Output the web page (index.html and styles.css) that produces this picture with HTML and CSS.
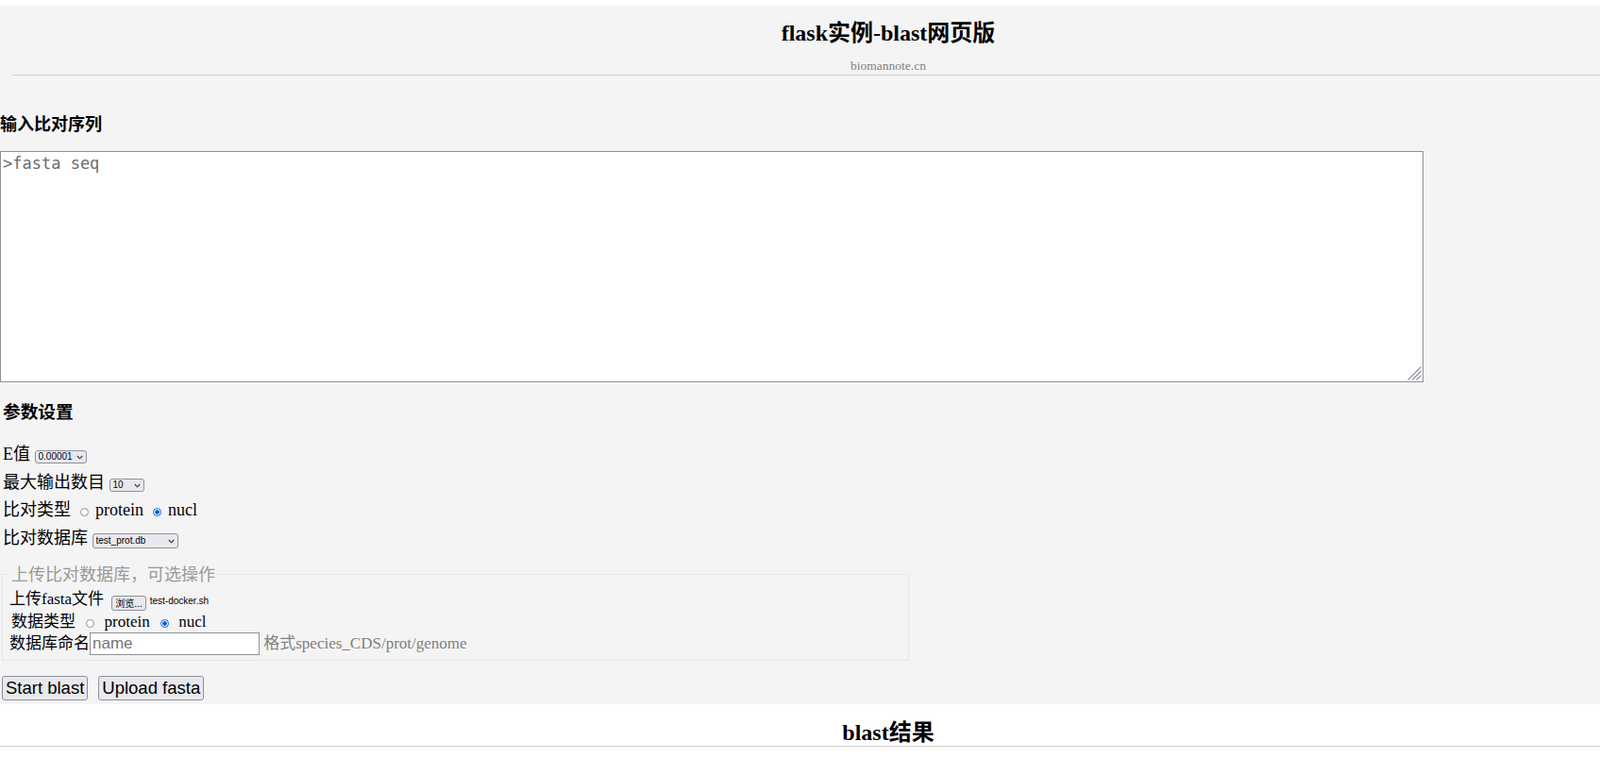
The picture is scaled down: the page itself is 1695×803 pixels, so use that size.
FILE: index.html
```html
<!DOCTYPE html>
<html lang="zh-CN">
<head>
<meta charset="utf-8">
<title>flask实例-blast网页版</title>
<link rel="stylesheet" href="styles.css">
</head>
<body>
<div class="page">
  <header class="header">
    <h1 class="title">flask实例-blast网页版</h1>
    <p class="site">biomannote.cn</p>
  </header>

  <h3 class="sec-title sec-input">输入比对序列</h3>
  <div class="seq-wrap">
    <textarea class="seq" placeholder=">fasta seq"></textarea>
    <svg class="grip" width="16" height="16" viewBox="0 0 16 16"><path d="M1.5 15.5 L15.5 1.5 M6 15.5 L15.5 6 M10.5 15.5 L15.5 10.5" fill="none" stroke="#8f8f9d" stroke-width="1.2"/></svg>
  </div>

  <h3 class="sec-title sec-params">参数设置</h3>
  <div class="params">
    <div class="row">E值 <span class="sel sel-e"><select><option>0.00001</option></select><svg class="chev" width="7" height="5" viewBox="0 0 7 5"><path d="M0.8 1 L3.5 3.8 L6.2 1" fill="none" stroke="#333" stroke-width="1.1"/></svg></span></div>
    <div class="row">最大输出数目 <span class="sel sel-n"><select><option>10</option></select><svg class="chev" width="7" height="5" viewBox="0 0 7 5"><path d="M0.8 1 L3.5 3.8 L6.2 1" fill="none" stroke="#333" stroke-width="1.1"/></svg></span></div>
    <div class="row">比对类型 <input class="radio" type="radio" name="t1"> protein <input class="radio" type="radio" name="t1" checked> nucl</div>
    <div class="row">比对数据库 <span class="sel sel-db"><select><option>test_prot.db</option></select><svg class="chev" width="7" height="5" viewBox="0 0 7 5"><path d="M0.8 1 L3.5 3.8 L6.2 1" fill="none" stroke="#333" stroke-width="1.1"/></svg></span></div>
  </div>

  <fieldset class="upload">
    <legend class="legend">上传比对数据库，可选操作</legend>
    <div class="frow">上传fasta文件 <span class="file-btn">浏览...</span><span class="file-name">test-docker.sh</span></div>
    <div class="frow frow-type">数据类型 <input class="radio radio-f" type="radio" name="t2"> protein <input class="radio radio-f" type="radio" name="t2" checked> nucl</div>
    <div class="frow">数据库命名<input class="name-input" type="text" placeholder="name"> <span class="hint">格式species_CDS/prot/genome</span></div>
  </fieldset>

  <div class="actions">
    <button class="btn" type="button">Start blast</button>
    <button class="btn" type="button">Upload fasta</button>
  </div>
</div>

<section class="results">
  <h2 class="results-title">blast结果</h2>
</section>
</body>
</html>
```

FILE: styles.css
```css
html, body {
  margin: 0;
  padding: 0;
}

body {
  font-family: "Liberation Serif", "Noto Sans CJK SC", serif;
  color: #000;
  background: #fff;
}

.page {
  margin-top: 6px;
  background: #f4f4f4;
  padding-bottom: 4px;
}

.header {
  margin-left: 13px;
  padding: 15px 0 1px 174px;
  border-bottom: 1px solid #cfcfcf;
  text-align: center;
}

.title {
  margin: 0;
  font-size: 24px;
  line-height: 28px;
  font-weight: bold;
}

.site {
  margin: 13px 0 0;
  font-size: 13.5px;
  line-height: 16px;
  color: #808080;
}

.sec-title {
  margin: 0;
  font-size: 18px;
  line-height: 22px;
  font-weight: bold;
}

.sec-input {
  margin-top: 41px;
  margin-bottom: 17px;
}

.seq-wrap {
  position: relative;
  width: 1508px;
}

.seq {
  display: block;
  box-sizing: border-box;
  width: 1508px;
  height: 245px;
  margin: 0;
  padding: 2px 2px;
  border: 1px solid #8f8f9d;
  background: #fff;
  font-family: "DejaVu Sans Mono", "Liberation Mono", monospace;
  font-size: 17px;
  line-height: 20px;
  resize: none;
}

.seq::placeholder {
  color: #6d6d6d;
}

.grip {
  position: absolute;
  right: 2px;
  bottom: 2px;
  pointer-events: none;
}

.sec-params {
  margin-top: 21px;
  margin-left: 3px;
  font-size: 18.7px;
}

.params {
  margin-top: 19px;
  padding-left: 3px;
  font-size: 18px;
  line-height: 29.5px;
}

.sel {
  position: relative;
  display: inline-block;
  line-height: 0;
}

.sel select {
  appearance: none;
  -webkit-appearance: none;
  box-sizing: border-box;
  height: 14px;
  margin: 0;
  padding: 0 10px 0 3px;
  border: 1px solid #8f8f9d;
  border-radius: 3px;
  background: #e9e9ed;
  color: #000;
  font-family: "Liberation Sans", "Noto Sans CJK SC", sans-serif;
  font-size: 10px;
  line-height: 12px;
}

.sel-e select { width: 55px; }
.sel-n select { width: 37px; }
.sel-db select { width: 91px; height: 16px; }

.chev {
  position: absolute;
  right: 4px;
  top: 5px;
}

.sel-db .chev { top: 6px; }

.radio {
  appearance: none;
  -webkit-appearance: none;
  box-sizing: border-box;
  width: 9px;
  height: 9px;
  margin: 0 3px 0 5px;
  border: 1px solid #8f8f9d;
  border-radius: 50%;
  background: #fff;
  vertical-align: -1px;
}

.radio:checked {
  border-color: #0060df;
  background: radial-gradient(circle, #0060df 0 2px, #fff 2.6px);
}

.upload {
  box-sizing: border-box;
  width: 961px;
  margin: 12.5px 0 0 2px;
  padding: 4px 7px 5px;
  border: 1px solid #e6e6e6;
}

.legend {
  padding: 0 2px;
  font-size: 18px;
  line-height: 22px;
  color: #999;
}

.frow {
  font-size: 17px;
  line-height: 22px;
}

.frow-type {
  padding-left: 2px;
}

.radio-f {
  margin: 0 6px 0 7px;
}

.file-btn {
  display: inline-block;
  box-sizing: border-box;
  height: 16px;
  padding: 0 3px;
  margin-left: 4px;
  border: 1px solid #8f8f9d;
  border-radius: 3px;
  background: #e9e9ed;
  font-family: "Noto Sans CJK SC", "Liberation Sans", sans-serif;
  font-size: 10px;
  line-height: 14px;
  vertical-align: -3px;
}

.file-name {
  margin-left: 4px;
  font-family: "Liberation Sans", sans-serif;
  font-size: 10px;
}

.name-input {
  box-sizing: border-box;
  width: 180px;
  height: 24px;
  margin: 0;
  padding: 0 2px;
  border: 1px solid #8f8f9d;
  background: #fff;
  font-family: "Liberation Sans", sans-serif;
  font-size: 17px;
}

.name-input::placeholder {
  color: #757575;
}

.hint {
  color: #808080;
}

.actions {
  display: flex;
  gap: 11px;
  margin-top: 16px;
  padding-left: 2px;
}

.btn {
  box-sizing: border-box;
  height: 26px;
  margin: 0;
  padding: 0 3px;
  border: 1px solid #8f8f9d;
  border-radius: 3px;
  background: #e9e9ed;
  color: #000;
  font-family: "Liberation Sans", sans-serif;
  font-size: 18.5px;
  line-height: 24px;
}

.results {
  padding: 16px 0 0 187px;
  border-bottom: 1px solid #d3d3d3;
  text-align: center;
}

.results-title {
  margin: 0;
  font-size: 24px;
  line-height: 28px;
  font-weight: bold;
}
```
